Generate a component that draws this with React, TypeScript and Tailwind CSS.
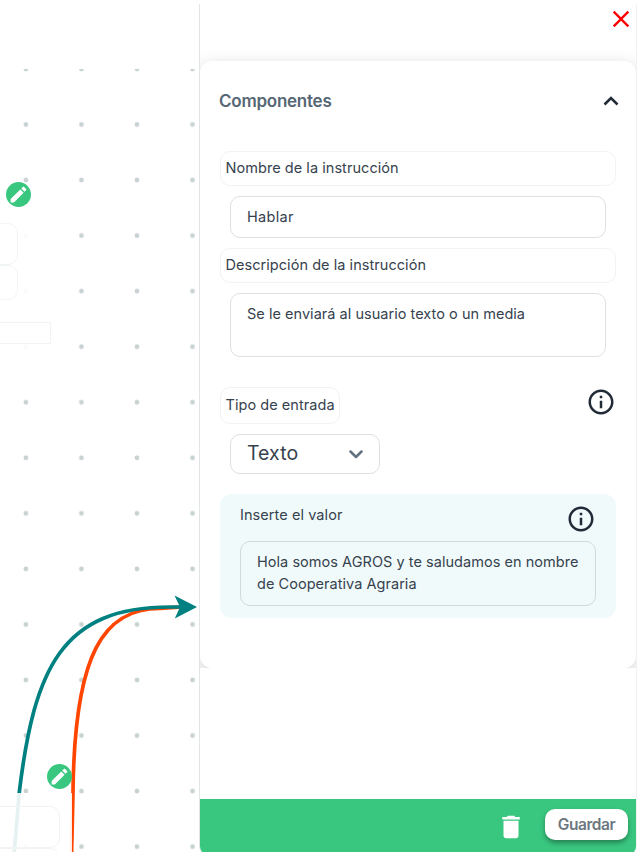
import type { ReactNode } from 'react';
import { MdClose, MdDelete, MdEdit, MdInfoOutline } from 'react-icons/md';

function EditBadge({ place }: { place: string }) {
  return (
    <span className={`absolute flex size-[25px] items-center justify-center rounded-full bg-[#39c77f] text-white ${place}`}>
      <MdEdit size={21} />
    </span>
  );
}

function FlowCanvas() {
  return (
    <section className="relative w-[199px] shrink-0 overflow-hidden">
      <svg className="absolute inset-0" width="199" height="852">
        <defs>
          <pattern id="dots" x="-1.9" y="96.75" width="55.55" height="55.55" patternUnits="userSpaceOnUse">
            <circle cx="27.8" cy="27.8" r="2.4" fill="#c8d2d3" />
          </pattern>
        </defs>
        <rect y="69" width="199" height="783" fill="url(#dots)" />
        <path d="M182 607L160 608.5C103.7 608.5 74.5 653 73 792L71.6 852" fill="none" stroke="#ff4500" strokeWidth="3.7" />
        <path d="M182 607H170C62 607 34.3 668 19.3 792L14.3 852" fill="none" stroke="#008080" strokeWidth="3.7" />
        <path d="M174.5 595.5L197 607L174.8 618.5L180 607Z" fill="#008080" />
      </svg>
      <div className="absolute top-[211px] left-0 h-[142px] w-[52px] bg-white/90" />
      <div className="absolute top-[223px] -left-5 h-[42px] w-[38px] rounded-[10px] border border-[#f2f5f5]" />
      <div className="absolute top-[265px] -left-5 h-[35px] w-[38px] rounded-[10px] border border-[#f2f5f5]" />
      <div className="absolute top-[322px] -left-5 h-[22px] w-[71px] border border-[#f2f3f3]" />
      <div className="absolute top-[793px] left-0 h-[59px] w-[72px] bg-white/90" />
      <div className="absolute top-[806px] -left-5 h-[42px] w-[80px] rounded-[10px] border border-[#f2f3f3]" />
      <div className="absolute top-[848px] -left-5 h-[42px] w-[80px] rounded-[10px] border border-[#f2f3f3]" />
      <EditBadge place="left-[6px] top-[182px]" />
      <EditBadge place="left-[47px] top-[764px]" />
    </section>
  );
}

function FieldLabel({ children, size }: { children: ReactNode; size: string }) {
  return (
    <div className={`flex items-center rounded-[10px] border border-[#f0f4f4] pb-[2px] pl-[4.5px] tracking-[0.05px] whitespace-nowrap ${size}`}>
      {children}
    </div>
  );
}

export default function App() {
  return (
    <main className="flex h-[852px] w-[637px] overflow-hidden bg-white font-['Inter',sans-serif] text-[14.5px] text-[#36424e]">
      <FlowCanvas />
      <aside className="mt-1 flex h-[852px] w-[438px] shrink-0 flex-col rounded-b-[10px] border-x border-l-[#e2e5e5] border-r-[#f0f1f1]">
        <div className="h-[664px] shrink-0 overflow-hidden">
          <header className="flex h-[57px] items-start justify-end pt-px pr-px text-[#ff0000]">
            <MdClose size={28} />
          </header>
          <section className="h-[607px] rounded-[12px] bg-white px-5 shadow-[0_5px_18px_rgba(0,0,0,0.18)]">
            <div className="flex h-20 items-center justify-between">
              <h2 className="-ml-px pt-[2px] text-[17px] font-semibold tracking-[-0.25px] text-[#566775]">Componentes</h2>
              <svg width="16" height="10" viewBox="0 0 16 10" fill="none" stroke="#202b37" strokeWidth="2.6" className="-mr-[3px]">
                <path d="M1.5 8.5L8 2L14.5 8.5" />
              </svg>
            </div>
            <div className="pt-[10px]">
              <FieldLabel size="h-[35px]">Nombre de la instrucción</FieldLabel>
              <div className="mx-[10px] mt-[10px] flex h-[42px] items-center rounded-[10px] border border-[#dce0e4] pl-4 tracking-[0.3px]">Hablar</div>
              <div className="mt-[10px]">
                <FieldLabel size="h-[35px]">Descripción de la instrucción</FieldLabel>
              </div>
              <div className="mx-[10px] mt-[10px] h-16 rounded-[10px] border border-[#dce0e4] pt-[9px] pl-4 leading-[22px] tracking-[0.03px]">Se le enviará al usuario texto o un media</div>
            </div>
            <div className="mt-[30px] flex items-start justify-between">
              <FieldLabel size="h-[37px] w-[120px]">Tipo de entrada</FieldLabel>
              <MdInfoOutline size={30} className="text-[#202b37]" />
            </div>
            <div className="mt-[10px] ml-[10px] flex h-10 w-[150px] items-center justify-between rounded-[10px] border border-[#dce0e4] pr-4 pl-4 text-[19.5px]">
              <span className="tracking-[0.05px]">Texto</span>
              <svg width="14" height="9" viewBox="0 0 14 9" fill="none" stroke="#637381" strokeWidth="2.5" strokeLinecap="round" strokeLinejoin="round">
                <path d="M1.5 1.5L7 7L12.5 1.5" />
              </svg>
            </div>
            <div className="mt-5 h-[124px] rounded-[12px] bg-[#f0fafb] px-5 pt-[10px]">
              <div className="flex h-[37px] items-start justify-between">
                <span className="leading-[22px] tracking-[0.07px]">Inserte el valor</span>
                <MdInfoOutline size={30} className="text-[#202b37]" />
              </div>
              <div className="h-[65px] rounded-[10px] border border-[#d0dadd] pt-[9px] pl-4 leading-[22px] tracking-[0.04px] whitespace-nowrap">
                <p>Hola somos AGROS y te saludamos en nombre</p>
                <p>de Cooperativa Agraria</p>
              </div>
            </div>
          </section>
        </div>
        <div className="h-[131px] shrink-0" />
        <footer className="flex h-[57px] shrink-0 items-start justify-end rounded-b-[10px] bg-[#39c77f] pt-[10px] pr-2">
          <MdDelete size={30} className="mt-[3px] mr-[19px] text-white" />
          <button className="h-[31px] w-[83px] rounded-[10px] bg-white text-[15.5px] font-semibold tracking-[-0.45px] text-[#6c7781] shadow-[0_3px_5px_rgba(0,0,0,0.35)]">Guardar</button>
        </footer>
      </aside>
    </main>
  );
}
